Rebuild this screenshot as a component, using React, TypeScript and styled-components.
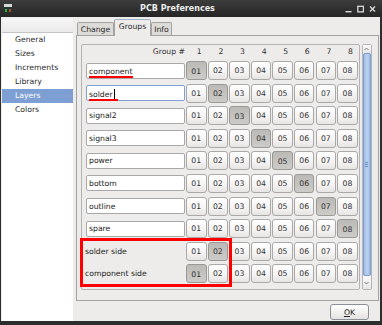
import React from "react";
import styled, { createGlobalStyle } from "styled-components";

const GlobalStyle = createGlobalStyle`
  html, body {
    margin: 0;
    padding: 0;
    background: #2b2b2b;
    overflow: hidden;
  }
  body {
    font-family: "DejaVu Sans", "Liberation Sans", sans-serif;
  }
`;

const COLORS = {
  frame: "#2d2d2d",
  bg: "#edeceb",
  text: "#2a2a2a",
  border: "#a3a3a3",
  select: "#7d9fd3",
  red: "#ff0000",
};

const Window = styled.div`
  width: 382px;
  height: 325px;
  background: ${COLORS.frame};
  display: flex;
  flex-direction: column;
  box-sizing: border-box;
  padding: 0 2px 4px 1px;
`;

const TitleBar = styled.div`
  height: 17px;
  margin: 0 -2px 0 -1px;
  display: flex;
  align-items: center;
  background: linear-gradient(#3c3c3c, #262626);
`;

const AppIcon = styled.div`
  width: 15px;
  display: flex;
  justify-content: center;
`;

const Title = styled.div`
  flex: 1;
  text-align: center;
  color: #ececec;
  font-weight: bold;
  font-size: 8px;
  line-height: 17px;
`;

const WinButtons = styled.div`
  width: 42px;
  display: flex;
  align-items: center;
  justify-content: flex-end;
  gap: 5px;
  padding-right: 6px;
  box-sizing: border-box;
`;

const Body = styled.div`
  flex: 1;
  display: flex;
  background: ${COLORS.bg};
  padding-top: 1px;
`;

const Sidebar = styled.div`
  width: 71px;
  margin-left: 1px;
  background: #fff;
  display: flex;
  flex-direction: column;
`;

const SidebarHeader = styled.div`
  height: 14px;
  background: linear-gradient(#f6f6f6, #eaeaea);
  border-bottom: 1px solid #c4c4c4;
`;

const SideItem = styled.div<{ $active?: boolean }>`
  height: 14px;
  line-height: 14px;
  padding-left: 13px;
  font-size: 7.7px;
  color: ${(p) => (p.$active ? "#fff" : COLORS.text)};
  background: ${(p) => (p.$active ? COLORS.select : "transparent")};
`;

const Main = styled.div`
  width: 303px;
  margin-left: 3px;
  display: flex;
  flex-direction: column;
`;

const TabBar = styled.div`
  height: 17px;
  display: flex;
  align-items: flex-end;
  padding-left: 1px;
`;

const Tab = styled.div<{ $active?: boolean; $w: number }>`
  width: ${(p) => p.$w}px;
  height: ${(p) => (p.$active ? 17 : 13)}px;
  box-sizing: border-box;
  border: 1px solid ${COLORS.border};
  border-bottom: none;
  border-radius: 2px 2px 0 0;
  background: ${(p) => (p.$active ? COLORS.bg : "#dddbd7")};
  border-top-color: ${(p) => (p.$active ? "#9fb3cf" : COLORS.border)};
  margin-bottom: ${(p) => (p.$active ? -1 : 0)}px;
  position: relative;
  z-index: ${(p) => (p.$active ? 1 : 0)};
  display: flex;
  align-items: center;
  justify-content: center;
  padding-bottom: ${(p) => (p.$active ? 3 : 0)}px;
  font-size: 7.7px;
  color: ${COLORS.text};
`;

const Panel = styled.div`
  height: 266px;
  box-sizing: border-box;
  border: 1px solid ${COLORS.border};
  background: ${COLORS.bg};
  padding: 8px 6px 10px 4px;
  display: flex;
  gap: 2px;
`;

const Viewport = styled.div`
  flex: 1;
  border: 1px solid #b3b3b3;
  border-radius: 2px;
  padding: 0 0 0 4px;
`;

const Rows = styled.div`
  display: flex;
  flex-direction: column;
  gap: 3.6px;
`;

const GridRow = styled.div`
  display: grid;
  grid-template-columns: 100px repeat(8, 21.6px);
  height: 19px;
  align-items: center;
`;

const HeaderRow = styled(GridRow)`
  height: 13px;
  margin-bottom: 3px;
  font-size: 7.7px;
  color: #333;
`;

const HeaderGroup = styled.div`
  text-align: right;
  padding-right: 1px;
`;

const HeaderNum = styled.div`
  text-align: center;
  padding-left: 5px;
`;

const Entry = styled.div<{ $focused?: boolean }>`
  width: 99px;
  height: 16px;
  box-sizing: border-box;
  border: 1px solid ${(p) => (p.$focused ? "#7ea2d6" : "#a8a8a8")};
  border-radius: 2px;
  background: #fff;
  padding: 0 2px;
  display: flex;
  align-items: center;
  font-size: 7.7px;
  color: #222;
`;

const Mark = styled.span<{ $extra: number }>`
  display: inline-flex;
  align-items: center;
  line-height: 9px;
  border-bottom: 2px solid ${COLORS.red};
  padding-right: ${(p) => p.$extra}px;
  position: relative;
  top: 2px;
`;

const Caret = styled.span`
  display: inline-block;
  width: 1px;
  height: 10px;
  background: #000;
  margin-left: 1px;
`;

const Label = styled.div`
  font-size: 7.7px;
  color: #222;
  margin-left: -1px;
`;

const GroupBtn = styled.div<{ $on?: boolean }>`
  width: 20.5px;
  height: 19px;
  box-sizing: border-box;
  border: 1px solid ${(p) => (p.$on ? "#9b9995" : "#aaa9a7")};
  border-radius: 3px;
  background: ${(p) =>
    p.$on
      ? "linear-gradient(#bcbab6, #cdcbc7)"
      : "linear-gradient(#ffffff, #f4f3f2 60%, #e6e5e3)"};
  display: flex;
  align-items: center;
  justify-content: center;
  padding-top: ${(p) => (p.$on ? 1 : 0)}px;
  font-size: 7.7px;
  color: #333;
`;

const SideGroup = styled.div`
  position: relative;
  display: flex;
  flex-direction: column;
  gap: 3.6px;
  &::after {
    content: "";
    position: absolute;
    left: -6px;
    top: -4px;
    bottom: -4px;
    width: 152px;
    box-sizing: border-box;
    border: 3px solid ${COLORS.red};
    pointer-events: none;
  }
`;

const ScrollBar = styled.div`
  width: 11px;
  box-sizing: border-box;
  border: 1px solid #b5b5b5;
  border-radius: 2px;
  background: #e2e1de;
  display: flex;
  flex-direction: column;
`;

const ScrollArrow = styled.div<{ $bottom?: boolean }>`
  height: ${(p) => (p.$bottom ? 13 : 8)}px;
  display: flex;
  align-items: center;
  justify-content: center;
  background: linear-gradient(#fbfbfb, #e5e5e5);
`;

const Thumb = styled.div`
  flex: 1;
  border: 1px solid #7d9fd3;
  border-radius: 2px;
  background: linear-gradient(90deg, #9fbbe4, #bcd1ef 50%, #9fbbe4);
  display: flex;
  flex-direction: column;
  align-items: center;
  justify-content: center;
  gap: 1px;
`;

const Grip = styled.div`
  width: 3px;
  height: 1px;
  background: #6f92c8;
`;

const Footer = styled.div`
  display: flex;
  justify-content: flex-end;
  padding: 3px 10px 0 0;
`;

const OkButton = styled.div`
  width: 39px;
  height: 16px;
  box-sizing: border-box;
  border: 1px solid #8a8f98;
  border-radius: 3px;
  background: linear-gradient(#ffffff, #e4e3e1);
  display: flex;
  align-items: center;
  justify-content: center;
  font-size: 7.7px;
  color: #222;
  u {
    text-decoration-thickness: 1px;
  }
`;

const sections = ["General", "Sizes", "Increments", "Library", "Layers", "Colors"];
const layers = ["component", "solder", "signal2", "signal3", "power", "bottom", "outline", "spare"];
const sides = [
  { label: "solder side", on: 2 },
  { label: "component side", on: 1 },
];
const groups = [1, 2, 3, 4, 5, 6, 7, 8];

const Buttons = ({ on }: { on: number }) => (
  <>
    {groups.map((g) => (
      <GroupBtn key={g} $on={g === on}>
        {String(g).padStart(2, "0")}
      </GroupBtn>
    ))}
  </>
);

export default function App() {
  return (
    <>
      <GlobalStyle />
      <Window>
        <TitleBar>
          <AppIcon>
            <svg width="8" height="9" viewBox="0 0 8 9">
              <rect x="0" y="0" width="8" height="3" fill="#d8d8d8" />
              <rect x="0" y="3" width="8" height="6" fill="#1f3a2a" />
              <rect x="1" y="5" width="2" height="3" fill="#3fa34d" />
              <rect x="5" y="5" width="2" height="3" fill="#c83a3a" />
            </svg>
          </AppIcon>
          <Title>PCB Preferences</Title>
          <WinButtons>
            <svg width="7" height="8" viewBox="0 0 7 8">
              <rect x="0.5" y="6" width="6" height="1.4" fill="#d9d9d9" />
            </svg>
            <svg width="7" height="8" viewBox="0 0 7 8">
              <rect x="0.8" y="1.3" width="5.6" height="5.6" fill="none" stroke="#d9d9d9" strokeWidth="1.3" />
            </svg>
            <svg width="7" height="8" viewBox="0 0 7 8">
              <path d="M1 1.5 L6 6.5 M6 1.5 L1 6.5" stroke="#d9d9d9" strokeWidth="1.4" />
            </svg>
          </WinButtons>
        </TitleBar>
        <Body>
          <Sidebar>
            <SidebarHeader />
            {sections.map((s) => (
              <SideItem key={s} $active={s === "Layers"}>
                {s}
              </SideItem>
            ))}
          </Sidebar>
          <Main>
            <TabBar>
              <Tab $w={37}>Change</Tab>
              <Tab $w={37} $active>
                Groups
              </Tab>
              <Tab $w={21}>Info</Tab>
            </TabBar>
            <Panel>
              <Viewport>
                <HeaderRow>
                  <HeaderGroup>Group #</HeaderGroup>
                  {groups.map((g) => (
                    <HeaderNum key={g}>{g}</HeaderNum>
                  ))}
                </HeaderRow>
                <Rows>
                  {layers.map((name, i) => (
                    <GridRow key={name}>
                      <Entry $focused={i === 1}>
                        {i === 0 && <Mark $extra={0}>{name}</Mark>}
                        {i === 1 && (
                          <Mark $extra={3}>
                            {name}
                            <Caret />
                          </Mark>
                        )}
                        {i > 1 && name}
                      </Entry>
                      <Buttons on={i + 1} />
                    </GridRow>
                  ))}
                  <SideGroup>
                    {sides.map((s) => (
                      <GridRow key={s.label}>
                        <Label>{s.label}</Label>
                        <Buttons on={s.on} />
                      </GridRow>
                    ))}
                  </SideGroup>
                </Rows>
              </Viewport>
              <ScrollBar>
                <ScrollArrow>
                  <svg width="5" height="4" viewBox="0 0 5 4">
                    <path d="M0.5 3 L2.5 1 L4.5 3" fill="none" stroke="#777" strokeWidth="0.9" />
                  </svg>
                </ScrollArrow>
                <Thumb>
                  <Grip />
                  <Grip />
                  <Grip />
                </Thumb>
                <ScrollArrow $bottom>
                  <svg width="5" height="4" viewBox="0 0 5 4">
                    <path d="M0.5 1 L2.5 3 L4.5 1" fill="none" stroke="#777" strokeWidth="0.9" />
                  </svg>
                </ScrollArrow>
              </ScrollBar>
            </Panel>
            <Footer>
              <OkButton>
                <span>
                  <u>O</u>K
                </span>
              </OkButton>
            </Footer>
          </Main>
        </Body>
      </Window>
    </>
  );
}
